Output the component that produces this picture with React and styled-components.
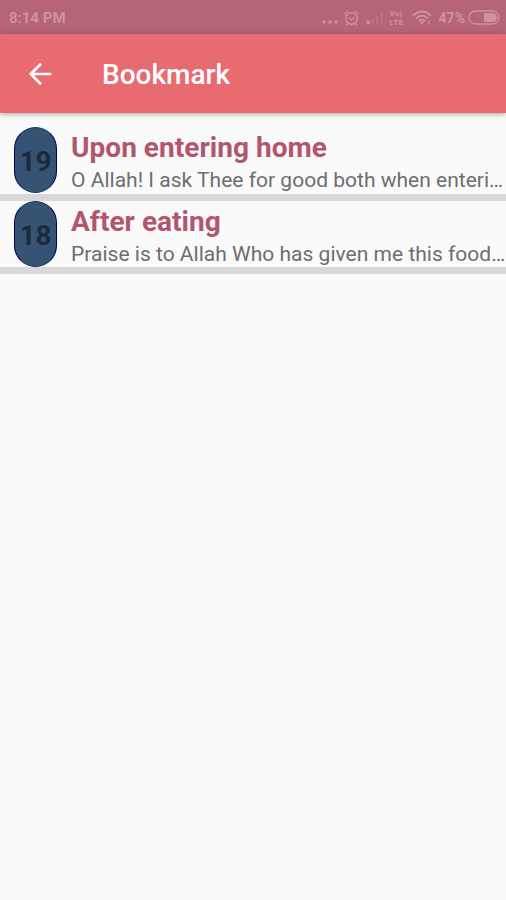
import React from "react";
import styled, { createGlobalStyle } from "styled-components";

const GlobalStyle = createGlobalStyle`
  * { box-sizing: border-box; }
  body { margin: 0; background: #fafafa; font-family: Roboto, sans-serif; }
`;

const Screen = styled.div`
  width: 506px;
  height: 900px;
  display: flex;
  flex-direction: column;
  overflow: hidden;
  background: #fafafa;
`;

const StatusBar = styled.header`
  height: 34px;
  flex: none;
  display: flex;
  align-items: center;
  justify-content: space-between;
  padding: 1px 6px 0 9px;
  background: #b56576;
  color: #d0929f;
`;

const StatusText = styled.span`
  font-size: ${(p) => p.$size || 15}px;
  line-height: 18px;
  font-weight: 700;
`;

const StatusIcons = styled.div`
  display: flex;
  align-items: center;

  svg { display: block; }
`;

const AppBar = styled.div`
  height: 79px;
  flex: none;
  display: flex;
  align-items: center;
  padding: 2px 0 0 24px;
  background: #e86b71;
  box-shadow: 0 1px 5px rgba(0, 0, 0, 0.35);
  z-index: 1;
`;

const BackButton = styled.button`
  width: 32px;
  height: 34px;
  padding: 0 0 2px;
  border: 0;
  background: none;

  svg { display: block; }
`;

const PageTitle = styled.h1`
  margin: 0 0 0 46px;
  color: #fff;
  font-size: 28px;
  line-height: 34px;
  font-weight: 500;
`;

const List = styled.ul`
  margin: 0;
  padding: 14px 0 0;
  list-style: none;
`;

const Row = styled.li`
  display: flex;
  height: 73.7px;
  padding-left: 14px;
  border-bottom: 7px solid #d9d9d9;
`;

const Badge = styled.span`
  width: 43px;
  height: 66px;
  flex: none;
  display: flex;
  align-items: center;
  justify-content: center;
  padding-top: 2.8px;
  border-radius: 22px;
  border: 1px solid #123766;
  border-left-color: #00005f;
  border-right-color: #00005f;
  background: #365373;
  color: #1b2b3c;
  font-size: 28px;
  font-weight: 700;
`;

const RowText = styled.div`
  min-width: 0;
  flex: 1;
  padding: 4px 0 0 14px;
`;

const RowTitle = styled.h2`
  margin: 0;
  color: #b2566e;
  font-size: 28px;
  line-height: 34px;
  font-weight: 700;
  letter-spacing: 0.04px;
  white-space: nowrap;
`;

const Excerpt = styled.p`
  margin: 2px 0 0;
  color: #6e6e6e;
  font-size: 21px;
  line-height: 26px;
  letter-spacing: 0.015px;
  white-space: nowrap;
`;

const bookmarks = [
  { number: 19, title: "Upon entering home", excerpt: "O Allah! I ask Thee for good both when enteri…" },
  { number: 18, title: "After eating", excerpt: "Praise is to Allah Who has given me this food…" },
];

const VolteLabel = styled.span`
  display: flex;
  flex-direction: column;
  width: 16px;
  margin: 0 6px 0 5px;
  font-size: 8px;
  line-height: 9px;
  font-weight: 700;
  letter-spacing: 0.4px;
`;

function SystemIcons() {
  return (
    <StatusIcons>
      <svg width="64" height="20" viewBox="0 0 64 20" fill="none" stroke="currentColor">
        <g fill="currentColor" stroke="none">
          <circle cx="3" cy="14" r="1.8" />
          <circle cx="9" cy="14" r="1.8" />
          <circle cx="15" cy="14" r="1.8" />
          <rect x="45.5" y="12.5" width="3.5" height="3.5" rx="1" />
        </g>
        <circle cx="30.5" cy="10.5" r="5.8" strokeWidth="1.4" />
        <path d="M27.5 9.5l3 2.5 3-2.5M23.5 6l3.5-3M37.5 6L34 3M26.5 15.5l-1.5 2M34.5 15.5l1.5 2" strokeWidth="1.3" />
        <path d="M52 16v-5M56 16V8M60.5 16V4.5" strokeWidth="1.9" opacity=".35" />
      </svg>
      <VolteLabel>
        <span>Voꞁ</span>
        <span>LTE</span>
      </VolteLabel>
      <svg width="20" height="18" viewBox="0 0 20 18" fill="none" stroke="currentColor" strokeWidth="1.8">
        <path d="M1 6.5Q10-1.5 19 6.5M4 9.5Q10 4 16 9.5M7 12.2Q10 9.3 13 12.2" />
        <path d="M8 13.2q2-1.5 4 0l-2 2.6z" fill="currentColor" stroke="none" />
        <path d="M17 12v3" opacity=".6" />
      </svg>
    </StatusIcons>
  );
}

const StatusEnd = styled.div`
  display: flex;
  align-items: center;
  gap: 3px;
`;

const Charge = styled.div`
  display: flex;
  margin-left: 4px;
`;

export default function App() {
  return (
    <>
      <GlobalStyle />
      <Screen>
        <StatusBar>
          <StatusText>8:14 PM</StatusText>
          <StatusEnd>
            <SystemIcons />
            <Charge>
              <StatusText $size={14}>47%</StatusText>
            </Charge>
            <svg width="32" height="15" viewBox="0 0 32 15">
              <rect x="1" y="1" width="30" height="13" rx="6.5" fill="none" stroke="currentColor" strokeWidth="1.3" />
              <path d="M16 3h8.5a4.5 4.5 0 0 1 0 9H16z" fill="currentColor" />
            </svg>
          </StatusEnd>
        </StatusBar>
        <AppBar>
          <BackButton aria-label="Back">
            <svg width="32" height="32" viewBox="0 0 32 32" fill="none" stroke="#fff" strokeWidth="2.7">
              <path d="M27.3 16H7M17 5.8L6.8 16 17 26.2" />
            </svg>
          </BackButton>
          <PageTitle>Bookmark</PageTitle>
        </AppBar>
        <List>
          {bookmarks.map((b) => (
            <Row key={b.number}>
              <Badge>{b.number}</Badge>
              <RowText>
                <RowTitle>{b.title}</RowTitle>
                <Excerpt>{b.excerpt}</Excerpt>
              </RowText>
            </Row>
          ))}
        </List>
      </Screen>
    </>
  );
}
